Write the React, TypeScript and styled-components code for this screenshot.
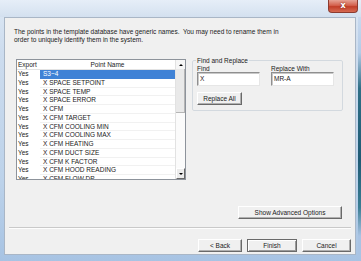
import React from "react";
import styled, { createGlobalStyle, css } from "styled-components";

const Global = createGlobalStyle`
  * { box-sizing: border-box; }
  html, body { margin: 0; padding: 0; overflow: hidden; }
  body {
    font-family: "Liberation Sans", Arial, sans-serif;
    font-size: 6.5px;
    color: #1a1a1a;
  }
`;

const Window = styled.div`
  width: 361px;
  height: 261px;
  display: flex;
  flex-direction: column;
  background: linear-gradient(180deg, #dde8f4 0%, #cddcee 20%, #bcd2ea 70%, #a7c3e3 100%);
  overflow: hidden;
`;

const TitleBar = styled.div`
  height: 17px;
  flex: none;
  display: flex;
  justify-content: flex-end;
  align-items: flex-start;
  padding-right: 3px;
  background: linear-gradient(180deg, #e6eef8 0%, #dbe6f3 60%, #d3e0ef 100%);
`;

const CloseButton = styled.div`
  width: 30px;
  height: 13px;
  border: 1px solid #8c3b2f;
  border-top: none;
  border-radius: 0 0 4px 4px;
  background: linear-gradient(180deg, #e6a294 0%, #d4614d 45%, #c23e28 55%, #d66a52 100%);
  color: #fff;
  font-family: "DejaVu Sans", sans-serif;
  font-weight: bold;
  font-size: 8px;
  line-height: 12px;
  text-align: center;
  text-shadow: 0 0 2px #6a1a10;
`;

const FrameBody = styled.div`
  flex: 1;
  display: flex;
  padding: 0 0 6px 4px;
`;

const Client = styled.div`
  width: 352px;
  height: 238px;
  background: #f0f0f0;
  border: 1px solid #a9b6c6;
  display: flex;
  flex-direction: column;
  padding-top: 10px;
`;

const RightEdge = styled.div`
  flex: 1;
  background: linear-gradient(180deg, #c8d9ee 0%, #b3cbe6 15%, #2f6f86 30%, #1f5a74 60%, #3a7d93 80%, #a9c3e3 92%);
  margin-left: 2px;
`;

const Intro = styled.p`
  margin: 0 0 0 9px;
  line-height: 8px;
  height: 16px;
  white-space: nowrap;
`;

const MainRow = styled.div`
  display: flex;
  margin-top: 13px;
  height: 162px;
`;

const ListBox = styled.div`
  margin: 2px 0 0 11px;
  width: 170px;
  height: 121px;
  border: 1px solid #8d939b;
  background: #fff;
  display: flex;
  overflow: hidden;
`;

const ListBody = styled.div`
  flex: 1;
  display: flex;
  flex-direction: column;
  overflow: hidden;
`;

const Row = styled.div<{ $header?: boolean }>`
  display: flex;
  flex: none;
  height: ${(p) => (p.$header ? "10px" : "8.75px")};
  line-height: ${(p) => (p.$header ? "10px" : "8.75px")};
  ${(p) =>
    p.$header &&
    css`
      border-bottom: 1px solid #e3e3e3;
    `}
`;

const ExportCell = styled.div`
  width: 23px;
  padding-left: 1px;
  white-space: nowrap;
`;

const NameCell = styled.div<{ $selected?: boolean; $header?: boolean }>`
  flex: 1;
  padding-left: 3px;
  white-space: nowrap;
  overflow: hidden;
  ${(p) =>
    p.$header
      ? css`
          text-align: center;
          padding-left: 0;
        `
      : css`
          border-bottom: 1px solid #f1f1f1;
        `}
  ${(p) =>
    p.$selected &&
    css`
      background: #3f82d6;
      color: #fff;
      border-bottom-color: #3f82d6;
    `}
`;

const ScrollBar = styled.div`
  width: 10px;
  flex: none;
  display: flex;
  flex-direction: column;
  background: #f6f6f6;
  border-left: 1px solid #e2e2e2;
`;

const ScrollArrow = styled.div<{ $down?: boolean }>`
  height: ${(p) => (p.$down ? "11px" : "9px")};
  flex: none;
  display: flex;
  align-items: center;
  justify-content: center;
  ${(p) =>
    p.$down &&
    css`
      border-top: 1px solid #fff;
      border-left: 1px solid #fff;
      border-right: 1px solid #6a6a6a;
      border-bottom: 1px solid #6a6a6a;
      background: #ececec;
    `}
  &::after {
    content: "";
    width: 0;
    height: 0;
    border-left: 2px solid transparent;
    border-right: 2px solid transparent;
    ${(p) =>
      p.$down
        ? css`
            border-top: 2px solid #000;
          `
        : css`
            border-bottom: 2px solid #000;
          `}
  }
`;

const ScrollThumb = styled.div`
  height: 44px;
  flex: none;
  background: #e9e9e9;
  border-right: 1px solid #b5b5b5;
  border-bottom: 1px solid #b5b5b5;
`;

const ScrollTrack = styled.div`
  flex: 1;
  background: #fbfbfb;
`;

const RightColumn = styled.div`
  margin-left: 6px;
  width: 151px;
  display: flex;
  flex-direction: column;
  align-items: flex-end;
`;

const GroupBox = styled.fieldset`
  margin: 0;
  width: 151px;
  height: 54px;
  border: 1px solid #d3d9df;
  border-radius: 2px;
  padding: 0 0 0 4px;
  align-self: stretch;
`;

const Legend = styled.legend`
  padding: 0 1px;
  margin-left: -1px;
  line-height: 7px;
`;

const FieldRow = styled.div`
  display: flex;
  gap: 11px;
  margin-top: 1px;
`;

const Field = styled.div`
  display: flex;
  flex-direction: column;
  width: 63px;
`;

const Label = styled.label`
  line-height: 7px;
  height: 7px;
`;

const TextInput = styled.div`
  height: 14px;
  background: #fff;
  border-top: 1px solid #8f8f8f;
  border-left: 1px solid #8f8f8f;
  border-right: 1px solid #e6e6e6;
  border-bottom: 1px solid #e6e6e6;
  box-shadow: inset 1px 1px 0 #c8c8c8;
  padding: 2px 0 0 2px;
  line-height: 7px;
`;

const Button = styled.div<{ $w: number; $default?: boolean }>`
  width: ${(p) => p.$w}px;
  height: 13px;
  flex: none;
  background: #f0f0f0;
  border-top: 1px solid #fff;
  border-left: 1px solid #fff;
  border-right: 1px solid #696969;
  border-bottom: 1px solid #696969;
  box-shadow: inset -1px -1px 0 #b0b0b0;
  text-align: center;
  line-height: 11px;
  white-space: nowrap;
  ${(p) =>
    p.$default &&
    css`
      border: 1px solid #6a6a6a;
      box-shadow: inset 1px 1px 0 #fff, inset -1px -1px 0 #9a9a9a;
    `}
`;

const ReplaceAll = styled(Button)`
  margin-top: 6px;
`;

const Spacer = styled.div`
  flex: 1;
`;

const AdvancedButton = styled(Button)`
  margin-right: 1px;
`;

const Separator = styled.div`
  margin: 8px 4px 0 4px;
  height: 2px;
  border-top: 1px solid #c9c9c9;
  border-bottom: 1px solid #fdfdfd;
`;

const ButtonRow = styled.div`
  display: flex;
  justify-content: flex-end;
  gap: 5px;
  margin-top: 10px;
  padding-right: 4px;
`;

const points = [
  "S3~4",
  "X SPACE SETPOINT",
  "X SPACE TEMP",
  "X SPACE ERROR",
  "X CFM",
  "X CFM TARGET",
  "X CFM COOLING MIN",
  "X CFM COOLING MAX",
  "X CFM HEATING",
  "X CFM DUCT SIZE",
  "X CFM K FACTOR",
  "X CFM HOOD READING",
  "X CFM FLOW DP",
];

export default function App() {
  return (
    <>
      <Global />
      <Window>
        <TitleBar>
          <CloseButton>x</CloseButton>
        </TitleBar>
        <FrameBody>
          <Client>
            <Intro>
              The points in the template database have generic names.&nbsp; You may need to rename them in
              <br />
              order to uniquely identify them in the system.
            </Intro>
            <MainRow>
              <ListBox>
                <ListBody>
                  <Row $header>
                    <ExportCell>Export</ExportCell>
                    <NameCell $header>Point Name</NameCell>
                  </Row>
                  {points.map((p, i) => (
                    <Row key={p}>
                      <ExportCell>Yes</ExportCell>
                      <NameCell $selected={i === 0}>{p}</NameCell>
                    </Row>
                  ))}
                </ListBody>
                <ScrollBar>
                  <ScrollArrow />
                  <ScrollThumb />
                  <ScrollTrack />
                  <ScrollArrow $down />
                </ScrollBar>
              </ListBox>
              <RightColumn>
                <GroupBox>
                  <Legend>Find and Replace</Legend>
                  <FieldRow>
                    <Field>
                      <Label>Find</Label>
                      <TextInput>X</TextInput>
                    </Field>
                    <Field>
                      <Label>Replace With</Label>
                      <TextInput>MR-A</TextInput>
                    </Field>
                  </FieldRow>
                  <ReplaceAll $w={45}>Replace All</ReplaceAll>
                </GroupBox>
                <Spacer />
                <AdvancedButton $w={104}>Show Advanced Options</AdvancedButton>
              </RightColumn>
            </MainRow>
            <Separator />
            <ButtonRow>
              <Button $w={44}>&lt; Back</Button>
              <Button $w={50} $default>
                Finish
              </Button>
              <Button $w={49}>Cancel</Button>
            </ButtonRow>
          </Client>
          <RightEdge />
        </FrameBody>
      </Window>
    </>
  );
}
